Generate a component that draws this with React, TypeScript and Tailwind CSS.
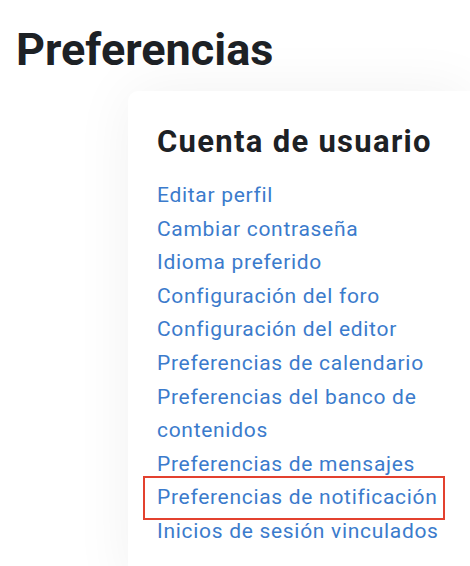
const links = [
  "Editar perfil",
  "Cambiar contraseña",
  "Idioma preferido",
  "Configuración del foro",
  "Configuración del editor",
  "Preferencias de calendario",
  "Preferencias del banco de contenidos",
  "Preferencias de mensajes",
  "Preferencias de notificación",
  "Inicios de sesión vinculados",
];

export default function App() {
  return (
    <div
      className="h-[566px] w-[470px] overflow-hidden bg-white"
      style={{ fontFamily: "Roboto, 'Liberation Sans', sans-serif" }}
    >
      <h1 className="pl-[16px] pt-[22px] text-[45px] font-bold leading-[56px] text-[#1d2125]">
        Preferencias
      </h1>
      <div className="ml-[128px] mt-[13px] rounded-l-[10px] bg-white pb-[40px] pl-[29px] pr-[10px] pt-[31px] shadow-[0_0_60px_rgba(0,0,0,0.06)]">
        <h2 className="text-[31px] font-bold leading-[40px] tracking-[1.3px] text-[#1d2125]">
          Cuenta de usuario
        </h2>
        <ul className="mt-[17px] text-[21px] leading-[33.6px] tracking-[0.7px] text-[#3b7bcc]">
          {links.map((l) => (
            <li key={l}>
              {l === "Preferencias de notificación" ? (
                <span className="-my-[5px] -ml-[14px] inline-block border-2 border-[#e3412f] py-[3px] pl-[12px] pr-[5px]">
                  {l}
                </span>
              ) : (
                <a href="#">{l}</a>
              )}
            </li>
          ))}
        </ul>
      </div>
    </div>
  );
}
